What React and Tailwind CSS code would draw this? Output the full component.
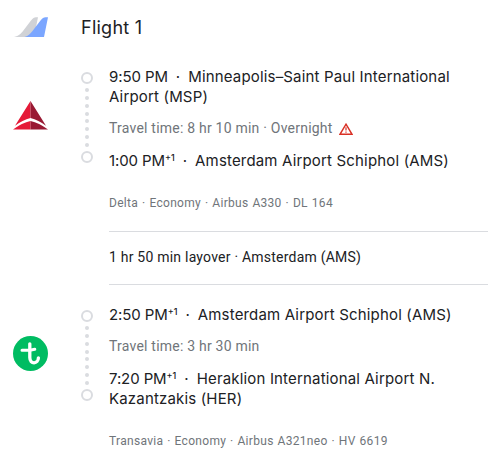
import clsx from 'clsx'

const legs = [
  {
    airline: 'Delta',
    logo: DeltaLogo,
    departure: { time: '9:50 PM', airport: 'Minneapolis–Saint Paul International Airport (MSP)' },
    travelTime: 'Travel time: 8 hr 10 min',
    overnight: true,
    arrival: { time: '1:00 PM', nextDay: true, airport: 'Amsterdam Airport Schiphol (AMS)' },
    details: ['Delta', 'Economy', 'Airbus A330', 'DL 164'],
  },
  {
    airline: 'Transavia',
    logo: TransaviaLogo,
    departure: { time: '2:50 PM', nextDay: true, airport: 'Amsterdam Airport Schiphol (AMS)' },
    travelTime: 'Travel time: 3 hr 30 min',
    arrival: { time: '7:20 PM', nextDay: true, airport: 'Heraklion International Airport N. Kazantzakis (HER)' },
    details: ['Transavia', 'Economy', 'Airbus A321neo', 'HV 6619'],
  },
]

function TailLogo() {
  return (
    <svg width="35" height="22" viewBox="0 0 35 22" className="block">
      <path d="M0 21C5 20 7 17.500 9 15L17 4.500C19 2 20 1.300 22 1.300H24L20 21Z" fill="#d0d2d6" />
      <path d="M10.500 21C14.500 20 16.500 17.500 18.500 15L26.500 4.500C28.500 2 29.500 1.300 31.500 1.300H34L30 21Z" fill="#7ba6ff" />
    </svg>
  )
}

function DeltaLogo() {
  return (
    <svg width="35" height="29" viewBox="0 0 35 29" className="block">
      <path d="M17.500 0V17Q9.500 19 2 24.800Z" fill="#e51937" />
      <path d="M17.500 0V17Q25.500 19 33 24.800Z" fill="#991933" />
      <path d="M17.500 20V28.500H0Q9 21.800 17.500 20Z" fill="#e51937" />
      <path d="M17.500 20V28.500H35Q26 21.800 17.500 20Z" fill="#991933" />
    </svg>
  )
}

function TransaviaLogo() {
  return (
    <svg width="35" height="35" viewBox="0 0 35 35" className="block">
      <circle cx="17.500" cy="17.500" r="17.500" fill="#00bc62" />
      <path d="M16.800 7.800V21.500C16.800 28.800 25.400 28.200 25.400 21.800" fill="none" stroke="#fff" strokeWidth="3.300" strokeLinecap="round" />
      <path d="M9 14.300H16.800L21.800 13.300" fill="none" stroke="#fff" strokeWidth="3" strokeLinecap="round" />
    </svg>
  )
}

function WarningIcon() {
  return (
    <svg width="14" height="12" viewBox="0 0 14 12" className="mt-px ml-[6px] block">
      <path d="M7 1.200L13 11.300H1Z" fill="none" stroke="#d93025" strokeWidth="1.400" />
      <path d="M7 4.300V7.600M7 8.500V9.800" stroke="#d93025" strokeWidth="1.200" />
    </svg>
  )
}

function Timeline() {
  return (
    <div className="mt-[5px] flex h-[91px] w-3 flex-col items-center justify-between">
      <span className="size-3 rounded-full border-2 border-[#dadce0]" />
      {Array.from({ length: 8 }, (_, i) => (
        <span key={i} className="size-1 rounded-full bg-[#dadce0]" />
      ))}
      <span className="size-3 rounded-full border-2 border-[#dadce0]" />
    </div>
  )
}

function Stop({ time, nextDay, airport }) {
  return (
    <div className="w-[360px] text-[15px] leading-5 text-[#202124]">
      <span className="tracking-[-0.1px]">{time}</span>
      {nextDay && <sup className="top-0 align-[5px] text-[9px] leading-none font-medium">+1</sup>}
      <span className="mx-[8px]">·</span>
      <span className="tracking-[0.17px]">{airport}</span>
    </div>
  )
}

function Leg({ leg }) {
  const Logo = leg.logo
  return (
    <div className="flex">
      <div className={clsx('ml-[13px] w-[68px] shrink-0', leg.overnight ? 'pt-[34px]' : 'pt-[31px]')}>
        <Logo />
      </div>
      <Timeline />
      <div className="ml-4">
        <Stop {...leg.departure} />
        <div className="mt-[11px] mb-[13px] flex h-5 items-center font-['Roboto',sans-serif] text-sm tracking-[0.22px] text-[#70757a]">
          {leg.travelTime}
          {leg.overnight && (
            <>
              <span className="whitespace-pre"> · Overnight</span>
              <WarningIcon />
            </>
          )}
        </div>
        <Stop {...leg.arrival} />
        <div className="mt-6 font-['Roboto',sans-serif] text-xs leading-4 tracking-[0.3px] text-[#70757a] [word-spacing:0.65px]">
          {leg.details.join(' · ')}
        </div>
      </div>
    </div>
  )
}

export default function App() {
  return (
    <div className="h-[455px] w-[488px] overflow-hidden bg-white font-['Inter',sans-serif]">
      <header className="flex h-[67px] items-start">
        <div className="mt-4 ml-[14px] w-[67px]">
          <TailLogo />
        </div>
        <h1 className="mt-4 text-lg leading-6 tracking-[0.25px] text-[#202124]">Flight 1</h1>
      </header>
      <Leg leg={legs[0]} />
      <div className="mt-5 mb-5 ml-[109px] flex h-[54px] items-center border-y border-[#dadce0] pb-0.5 font-['Roboto',sans-serif] text-sm tracking-[0.22px] text-[#202124]">
        1 hr 50 min layover · Amsterdam (AMS)
      </div>
      <Leg leg={legs[1]} />
    </div>
  )
}
